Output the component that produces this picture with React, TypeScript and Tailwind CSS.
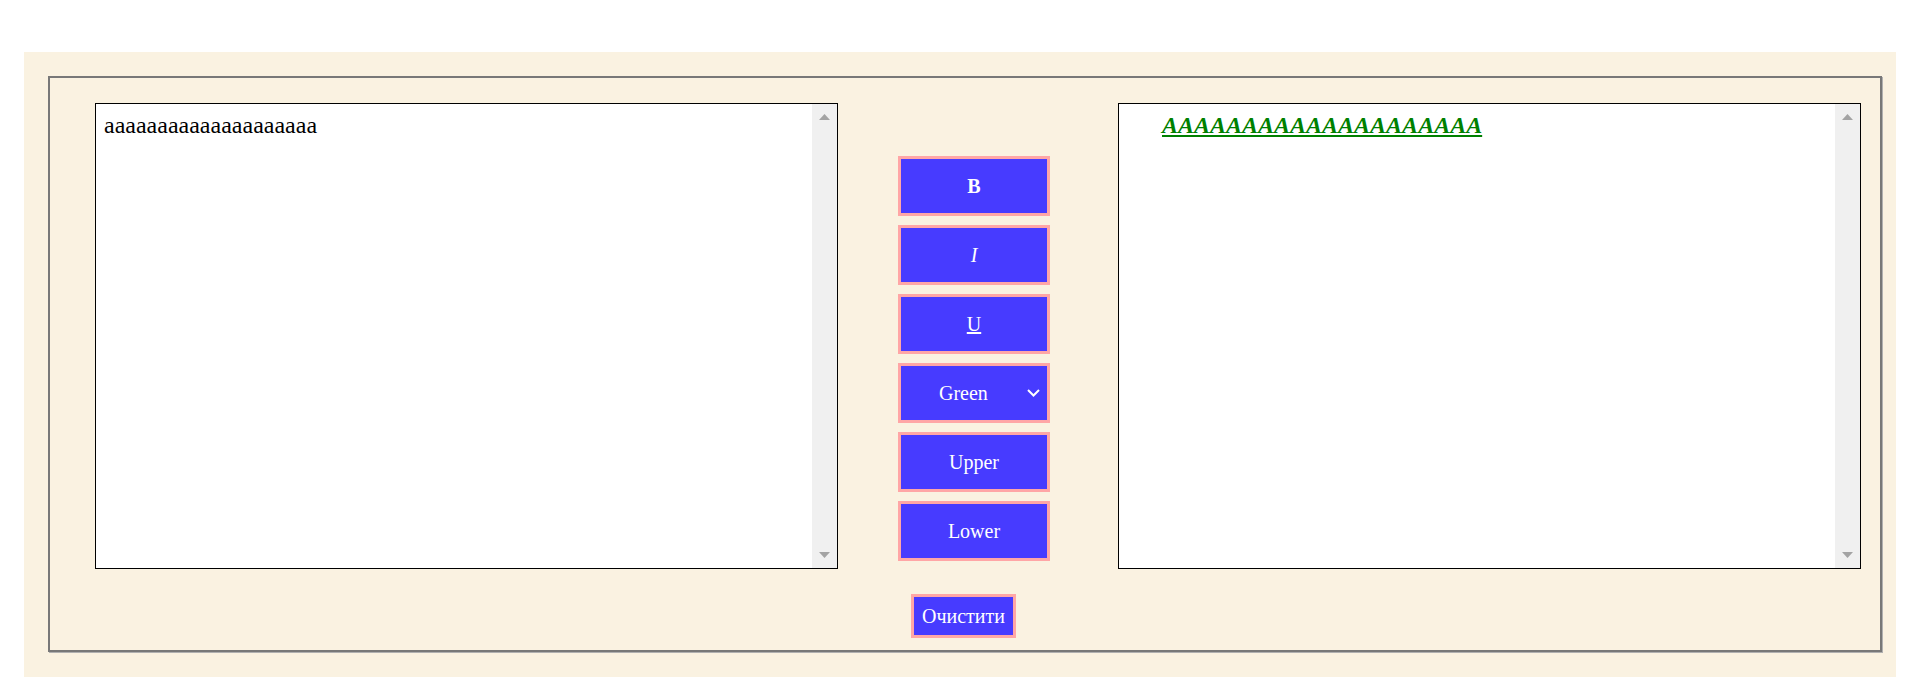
import React from "react";

function Scrollbar() {
  return (
    <div className="w-[25px] shrink-0 bg-[#f0f0f0] flex flex-col justify-between items-center pt-[10px] pb-[10px]">
      <svg width="11" height="6" viewBox="0 0 11 6">
        <polygon points="5.5,0 11,6 0,6" fill="#a3a3a3" />
      </svg>
      <svg width="11" height="6" viewBox="0 0 11 6">
        <polygon points="0,0 11,0 5.5,6" fill="#a3a3a3" />
      </svg>
    </div>
  );
}

function Btn({ children }: { children: React.ReactNode }) {
  return (
    <button className="w-[152px] h-[60px] border-[3px] border-[#ffa6a6] bg-[#473bff] text-white text-[20px] leading-[23px] flex items-center justify-center">
      {children}
    </button>
  );
}

export default function App() {
  const text = "aaaaaaaaaaaaaaaaaaaa";
  return (
    <div className="w-[1907px] h-[693px] bg-white pt-[52px] font-['Liberation_Serif',serif] text-black">
      <div className="ml-[24px] w-[1872px] h-[625px] bg-[#faf2e1] pt-[24px] pl-[24px]">
        <div className="w-[1834px] h-[576px] border-2 border-[#787878] shadow-[1px_1px_0_#b0b0b0] flex flex-col">
          <div className="flex pl-[45px] pt-[25px]">
            <div className="w-[743px] h-[466px] border border-black bg-white flex">
              <div className="flex-1 pl-[8px] pt-[7px] text-[24px] leading-[28px]">{text}</div>
              <Scrollbar />
            </div>
            <div className="ml-[60px] mt-[53px] flex flex-col gap-[9px]">
              <Btn>
                <span className="font-bold">B</span>
              </Btn>
              <Btn>
                <span className="italic">I</span>
              </Btn>
              <Btn>
                <span className="underline">U</span>
              </Btn>
              <div className="w-[152px] h-[60px] border-[3px] border-[#ffa6a6] bg-[#473bff] text-white text-[20px] leading-[23px] flex items-center justify-between pl-[38px] pr-[7px]">
                <span>Green</span>
                <svg width="13" height="8" viewBox="0 0 13 8">
                  <polyline points="1,1 6.5,6.5 12,1" fill="none" stroke="white" strokeWidth="2" />
                </svg>
              </div>
              <Btn>Upper</Btn>
              <Btn>Lower</Btn>
            </div>
            <div className="ml-[68px] w-[743px] h-[466px] border border-black bg-white flex">
              <div className="flex-1 pl-[43px] pt-[7px] text-[24px] leading-[28px]">
                <span className="font-bold italic underline text-[#008000]">{text.toUpperCase()}</span>
              </div>
              <Scrollbar />
            </div>
          </div>
          <div className="flex pl-[861px] pt-[25px]">
            <button className="h-[44px] px-[8px] border-[3px] border-[#ffa6a6] bg-[#473bff] text-white text-[20px] leading-[23px]">
              Очистити
            </button>
          </div>
        </div>
      </div>
    </div>
  );
}
